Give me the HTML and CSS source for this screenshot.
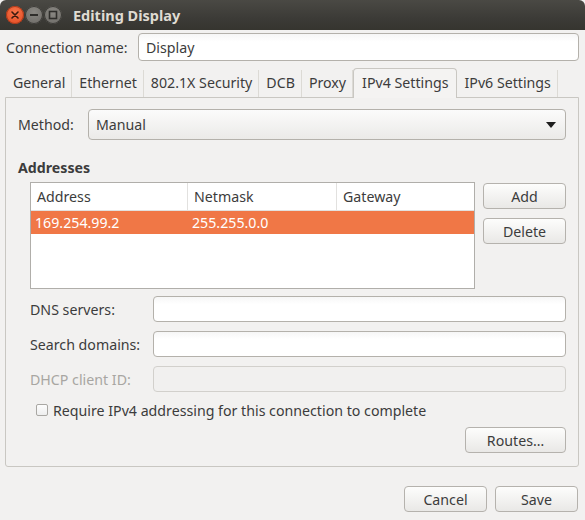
FILE: index.html
```html
<!DOCTYPE html>
<html>
<head>
<meta charset="utf-8">
<link rel="stylesheet" href="styles.css">
</head>
<body>
<div class="window">
  <div class="titlebar">
    <div class="wbtns">
      <span class="wbtn close"><svg width="18" height="18" viewBox="0 0 18 18"><path d="M6 6 L12 12 M12 6 L6 12" stroke="#3b1a0e" stroke-width="1.6" stroke-linecap="round"/></svg></span>
      <span class="wbtn"><svg width="18" height="18" viewBox="0 0 18 18"><path d="M5 9 H13" stroke="#2f2e2b" stroke-width="2"/></svg></span>
      <span class="wbtn"><svg width="18" height="18" viewBox="0 0 18 18"><rect x="5.5" y="5.5" width="7" height="7" fill="none" stroke="#2f2e2b" stroke-width="1.6"/></svg></span>
    </div>
    <div class="title">Editing Display</div>
  </div>
  <div class="content">
    <div class="conn-row">
      <span class="conn-label">Connection name:</span>
      <div class="entry conn-entry">Display</div>
    </div>
    <div class="notebook">
      <div class="tabs">
        <span class="tab">General</span>
        <span class="tab">Ethernet</span>
        <span class="tab">802.1X Security</span>
        <span class="tab">DCB</span>
        <span class="tab">Proxy</span>
        <span class="tab active">IPv4 Settings</span>
        <span class="tab">IPv6 Settings</span>
      </div>
      <div class="panel">
        <div class="method-row">
          <span class="method-label">Method:</span>
          <div class="combo"><span>Manual</span><span class="arrow"></span></div>
        </div>
        <div class="heading">Addresses</div>
        <div class="addr-area">
          <div class="tree">
            <div class="tree-head">
              <span class="col c1">Address</span>
              <span class="col c2">Netmask</span>
              <span class="col c3">Gateway</span>
            </div>
            <div class="tree-row selected">
              <span class="col c1">169.254.99.2</span>
              <span class="col c2">255.255.0.0</span>
              <span class="col c3"></span>
            </div>
          </div>
          <div class="side-btns">
            <div class="button side">Add</div>
            <div class="button side">Delete</div>
          </div>
        </div>
        <div class="form">
          <div class="form-row"><span class="flabel">DNS servers:</span><div class="entry fentry"></div></div>
          <div class="form-row"><span class="flabel">Search domains:</span><div class="entry fentry"></div></div>
          <div class="form-row disabled"><span class="flabel">DHCP client ID:</span><div class="entry fentry"></div></div>
        </div>
        <div class="check-row"><span class="checkbox"></span><span>Require IPv4 addressing for this connection to complete</span></div>
        <div class="routes-row"><div class="button routes">Routes…</div></div>
      </div>
    </div>
    <div class="actions">
      <div class="button act">Cancel</div>
      <div class="button act">Save</div>
    </div>
  </div>
</div>
</body>
</html>
```
FILE: styles.css
```css
* { box-sizing: border-box; }
html, body { margin: 0; padding: 0; }
body {
  background: #f2f1f0;
  font-family: "Noto Sans", "DejaVu Sans", sans-serif;
  font-size: 14.2px;
  color: #3c3c3c;
}
.window { width: 585px; height: 520px; background: #f2f1f0; overflow: hidden; }
.titlebar {
  height: 30px;
  background: linear-gradient(#4a4944, #3c3b37 60%, #36352f);
  border-radius: 6px 6px 0 0;
  display: flex;
  align-items: center;
  padding-left: 6px;
}
.wbtns { display: flex; gap: 1px; }
.wbtn {
  width: 18px; height: 18px; border-radius: 50%;
  background: radial-gradient(circle at 50% 35%, #8a8883, #6a6864);
  box-shadow: inset 0 0 0 1px #3a3935;
  display: flex;
}
.wbtn.close {
  background: radial-gradient(circle at 50% 35%, #f7754a, #e0471f);
  box-shadow: inset 0 0 0 1px #a9391a;
}
.title {
  margin-left: 11px;
  color: #dfdbd2;
  font-weight: bold;
  font-size: 14.5px;
}
.content { padding: 3px 6px 0 5px; }
.conn-row { display: flex; align-items: center; height: 28px; }
.conn-label { width: 133px; padding-left: 1px; }
.entry {
  background: linear-gradient(#f6f6f6, #ffffff 30%);
  border: 1px solid #b4b1ab;
  border-radius: 4px;
  display: flex;
  align-items: center;
  padding-left: 7px;
}
.conn-entry { flex: 1; height: 28px; }
.notebook { margin-top: 7px; }
.tabs { display: flex; height: 29px; align-items: flex-end; padding-left: 1px; }
.tab {
  height: 27px;
  display: flex; align-items: center;
  padding: 0 6px 2px 7px;
  border-right: 1px solid #dcdad5;
}
.tab.active {
  height: 30px;
  margin-bottom: -1px;
  background: #f4f3f2;
  border: 1px solid #c9c7c2;
  border-bottom: none;
  border-radius: 4px 4px 0 0;
  padding: 0 8px 3px;
  position: relative;
  z-index: 1;
}
.panel {
  height: 370px;
  border: 1px solid #c9c7c2;
  border-radius: 0 0 3px 3px;
  padding: 11px 12px 0;
  background: #f2f1f0;
}
.method-row { display: flex; align-items: center; height: 31px; }
.method-label { width: 70px; }
.combo {
  flex: 1; height: 31px;
  border: 1px solid #b4b1ab;
  border-radius: 4px;
  background: linear-gradient(#fbfbfb, #ebeae8);
  display: flex; align-items: center; justify-content: space-between;
  padding: 0 9px 0 7px;
}
.arrow {
  width: 0; height: 0;
  border-left: 5px solid transparent;
  border-right: 5px solid transparent;
  border-top: 6px solid #1e1e1e;
}
.heading { font-weight: bold; margin-top: 18px; height: 20px; line-height: 20px; }
.addr-area { display: flex; margin-top: 4px; padding-left: 12px; gap: 8px; }
.tree {
  width: 445px; height: 107px;
  border: 1px solid #b0aeaa;
  background: #fff;
}
.tree-head { display: flex; height: 28px; border-bottom: 1px solid #e2e1df; }
.tree-head .col { border-right: 1px solid #e2e1df; padding-left: 6px; }
.tree-head .col.c3 { border-right: none; }
.col { display: flex; align-items: center; }
.c1 { width: 157px; }
.c2 { width: 149px; }
.c3 { flex: 1; }
.tree-row { display: flex; height: 23px; }
.tree-row .col { padding-left: 4px; }
.tree-row.selected { background: #f07746; color: #fff; }
.tree-row .c1 { width: 157px; }
.side-btns { display: flex; flex-direction: column; gap: 9px; padding-top: 1px; }
.button {
  border: 1px solid #b5b2ad;
  border-radius: 4px;
  background: linear-gradient(#fdfdfc, #e9e8e6);
  display: flex; align-items: center; justify-content: center;
}
.side { width: 83px; height: 26px; }
.form { margin-top: 7px; padding-left: 12px; display: flex; flex-direction: column; gap: 9px; }
.form-row { display: flex; align-items: center; height: 26px; }
.flabel { width: 123px; }
.fentry { flex: 1; height: 26px; }
.form-row.disabled .flabel { color: #a8a6a2; }
.form-row.disabled .fentry { background: #f1f0ef; border-color: #d2d0cc; }
.check-row { display: flex; align-items: center; height: 20px; margin-top: 8px; padding-left: 18px; }
.checkbox {
  width: 12px; height: 12px;
  border: 1px solid #a9a7a3;
  border-radius: 2px;
  background: linear-gradient(#fdfdfd, #eeeeee);
  margin-right: 5px;
}
.routes-row { display: flex; justify-content: flex-end; margin-top: 7px; }
.routes { width: 101px; height: 26px; }
.actions { display: flex; justify-content: flex-end; gap: 8px; margin-top: 19px; padding-right: 1px; }
.act { width: 83px; height: 26px; }
```
